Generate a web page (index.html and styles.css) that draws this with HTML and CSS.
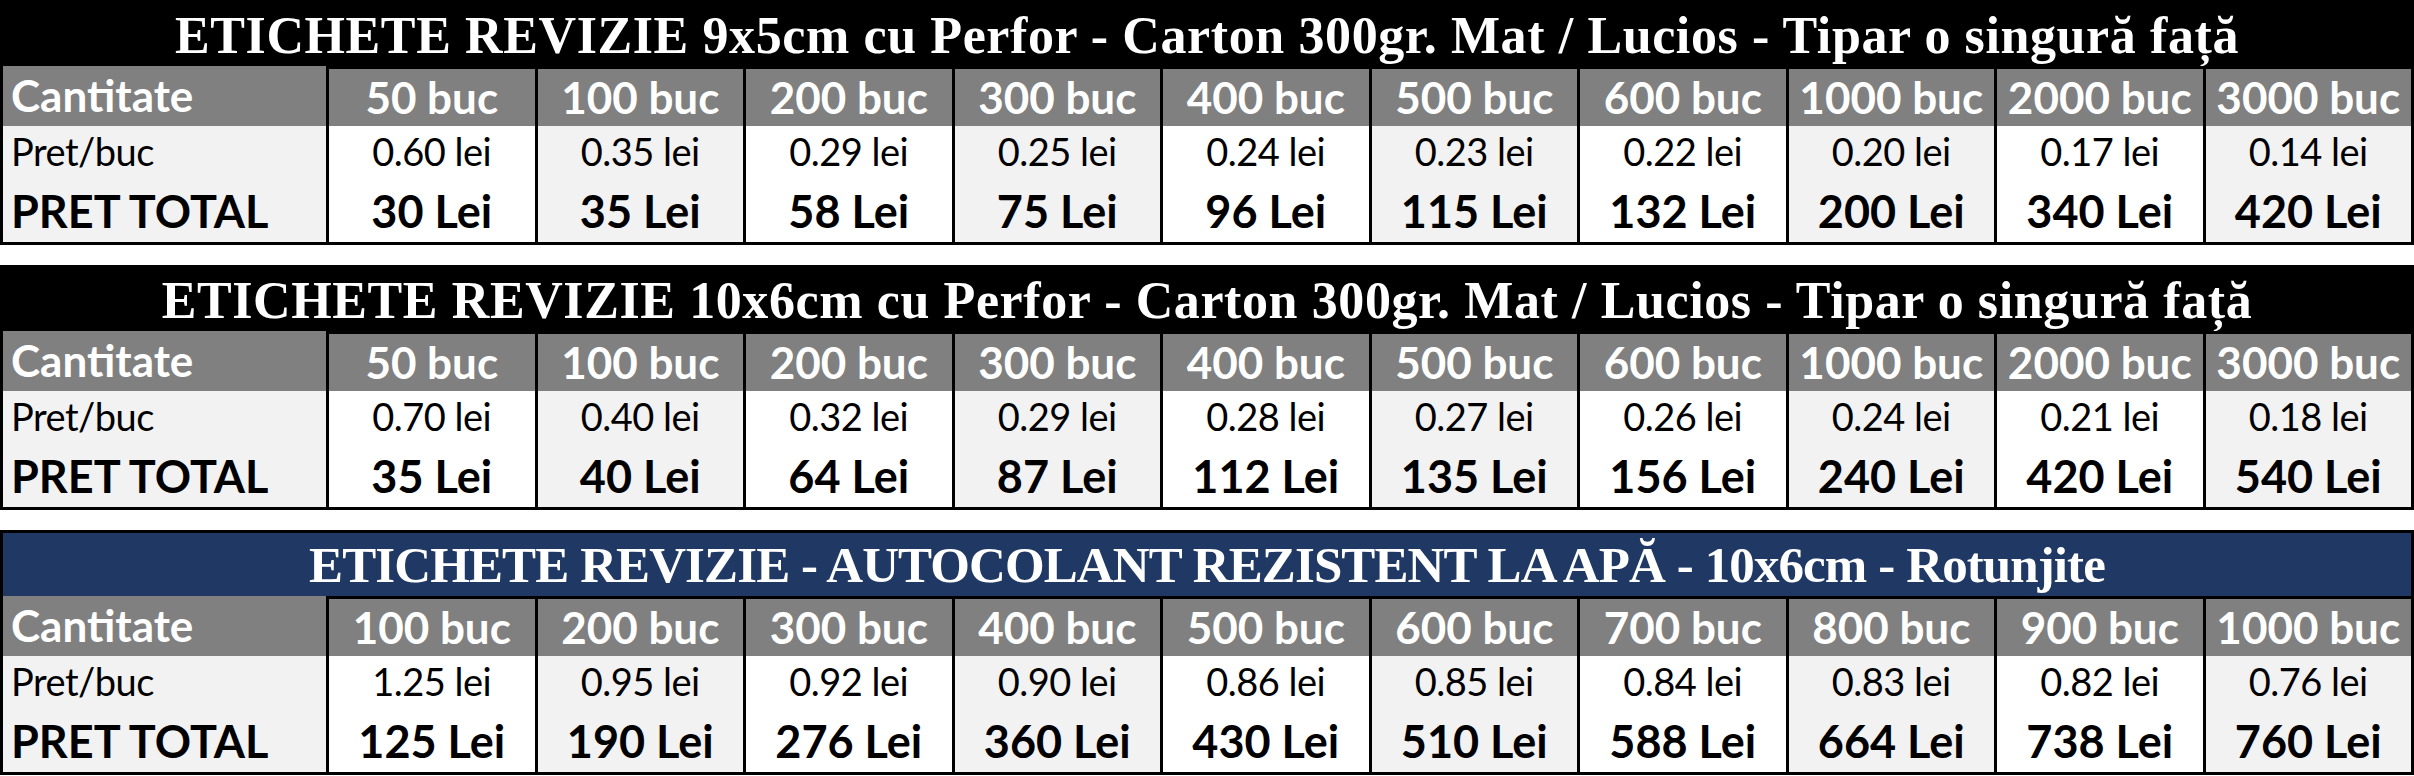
FILE: index.html
```html
<!DOCTYPE html>
<html lang="ro">
<head>
<meta charset="utf-8">
<title>Etichete revizie - preturi</title>
<link rel="stylesheet" href="styles.css">
</head>
<body>
<main class="page">
  <section class="price-table">
    <h2 class="title">ETICHETE REVIZIE 9x5cm cu Perfor - Carton 300gr. Mat / Lucios - Tipar o singură față</h2>
    <div class="grid">
      <div class="cell head label">Cantitate</div>
      <div class="cell head">50 buc</div><div class="cell head">100 buc</div><div class="cell head">200 buc</div><div class="cell head">300 buc</div><div class="cell head">400 buc</div><div class="cell head">500 buc</div><div class="cell head">600 buc</div><div class="cell head">1000 buc</div><div class="cell head">2000 buc</div><div class="cell head">3000 buc</div>
      <div class="cell unit label">Pret/buc</div>
      <div class="cell unit">0.60 lei</div><div class="cell unit alt">0.35 lei</div><div class="cell unit">0.29 lei</div><div class="cell unit alt">0.25 lei</div><div class="cell unit">0.24 lei</div><div class="cell unit alt">0.23 lei</div><div class="cell unit">0.22 lei</div><div class="cell unit alt">0.20 lei</div><div class="cell unit">0.17 lei</div><div class="cell unit alt">0.14 lei</div>
      <div class="cell total label">PRET TOTAL</div>
      <div class="cell total">30 Lei</div><div class="cell total alt">35 Lei</div><div class="cell total">58 Lei</div><div class="cell total alt">75 Lei</div><div class="cell total">96 Lei</div><div class="cell total alt">115 Lei</div><div class="cell total">132 Lei</div><div class="cell total alt">200 Lei</div><div class="cell total">340 Lei</div><div class="cell total alt">420 Lei</div>
    </div>
  </section>

  <section class="price-table">
    <h2 class="title">ETICHETE REVIZIE 10x6cm cu Perfor - Carton 300gr. Mat / Lucios - Tipar o singură față</h2>
    <div class="grid">
      <div class="cell head label">Cantitate</div>
      <div class="cell head">50 buc</div><div class="cell head">100 buc</div><div class="cell head">200 buc</div><div class="cell head">300 buc</div><div class="cell head">400 buc</div><div class="cell head">500 buc</div><div class="cell head">600 buc</div><div class="cell head">1000 buc</div><div class="cell head">2000 buc</div><div class="cell head">3000 buc</div>
      <div class="cell unit label">Pret/buc</div>
      <div class="cell unit">0.70 lei</div><div class="cell unit alt">0.40 lei</div><div class="cell unit">0.32 lei</div><div class="cell unit alt">0.29 lei</div><div class="cell unit">0.28 lei</div><div class="cell unit alt">0.27 lei</div><div class="cell unit">0.26 lei</div><div class="cell unit alt">0.24 lei</div><div class="cell unit">0.21 lei</div><div class="cell unit alt">0.18 lei</div>
      <div class="cell total label">PRET TOTAL</div>
      <div class="cell total">35 Lei</div><div class="cell total alt">40 Lei</div><div class="cell total">64 Lei</div><div class="cell total alt">87 Lei</div><div class="cell total">112 Lei</div><div class="cell total alt">135 Lei</div><div class="cell total">156 Lei</div><div class="cell total alt">240 Lei</div><div class="cell total">420 Lei</div><div class="cell total alt">540 Lei</div>
    </div>
  </section>

  <section class="price-table navy">
    <h2 class="title">ETICHETE REVIZIE - AUTOCOLANT REZISTENT LA APĂ - 10x6cm - Rotunjite</h2>
    <div class="grid">
      <div class="cell head label">Cantitate</div>
      <div class="cell head">100 buc</div><div class="cell head">200 buc</div><div class="cell head">300 buc</div><div class="cell head">400 buc</div><div class="cell head">500 buc</div><div class="cell head">600 buc</div><div class="cell head">700 buc</div><div class="cell head">800 buc</div><div class="cell head">900 buc</div><div class="cell head">1000 buc</div>
      <div class="cell unit label">Pret/buc</div>
      <div class="cell unit">1.25 lei</div><div class="cell unit alt">0.95 lei</div><div class="cell unit">0.92 lei</div><div class="cell unit alt">0.90 lei</div><div class="cell unit">0.86 lei</div><div class="cell unit alt">0.85 lei</div><div class="cell unit">0.84 lei</div><div class="cell unit alt">0.83 lei</div><div class="cell unit">0.82 lei</div><div class="cell unit alt">0.76 lei</div>
      <div class="cell total label">PRET TOTAL</div>
      <div class="cell total">125 Lei</div><div class="cell total alt">190 Lei</div><div class="cell total">276 Lei</div><div class="cell total alt">360 Lei</div><div class="cell total">430 Lei</div><div class="cell total alt">510 Lei</div><div class="cell total">588 Lei</div><div class="cell total alt">664 Lei</div><div class="cell total">738 Lei</div><div class="cell total alt">760 Lei</div>
    </div>
  </section>
</main>
</body>
</html>
```

FILE: styles.css
```css
* { box-sizing: border-box; }

html, body {
  margin: 0;
  padding: 0;
  background: #ffffff;
}

.page {
  width: 2414px;
  display: flex;
  flex-direction: column;
  gap: 20px;
  font-family: Lato, "Liberation Sans", sans-serif;
}

.price-table {
  border: 3px solid #000000;
  background: #000000;
  height: 245px;
  display: flex;
  flex-direction: column;
}

.title {
  margin: 0;
  height: 64px;
  display: flex;
  align-items: center;
  justify-content: center;
  background: #000000;
  color: #ffffff;
  font-family: "Liberation Serif", "Times New Roman", serif;
  font-weight: bold;
  font-size: 52px;
  letter-spacing: 0.6px;
  line-height: 1;
  white-space: nowrap;
  padding-top: 2px;
}

.navy .title {
  background: #1f3864;
  font-size: 51px;
  letter-spacing: -0.9px;
}

.grid {
  flex: 1;
  display: grid;
  grid-template-columns: 323px repeat(10, 1fr);
  grid-template-rows: 60px 56px 60px;
}

.cell {
  display: flex;
  align-items: center;
  justify-content: center;
  border-left: 3px solid #000000;
  background: #ffffff;
  color: #000000;
  white-space: nowrap;
  line-height: 1;
}

.cell.label {
  border-left: 0;
  justify-content: flex-start;
  padding-left: 8px;
  background: #f2f2f2;
}

.cell.alt {
  background: #f2f2f2;
}

.cell.head {
  background: #808080;
  color: #ffffff;
  font-weight: bold;
  font-size: 44px;
  border-top: 3px solid #000000;
  padding-bottom: 2px;
}

.cell.head.label {
  background: #808080;
  border-top: 0;
}

.cell.unit {
  font-size: 38px;
  font-weight: normal;
  letter-spacing: -0.5px;
  padding-bottom: 6px;
}

.cell.total {
  font-size: 45px;
  font-weight: bold;
  padding-bottom: 2px;
}
```
